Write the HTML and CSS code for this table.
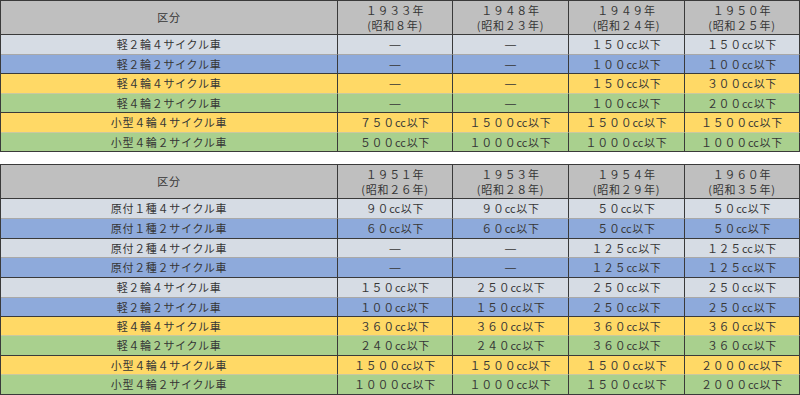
FILE: index.html
```html
<!DOCTYPE html>
<html lang="ja">
<head>
<meta charset="utf-8">
<title>排気量区分</title>
<link rel="stylesheet" href="styles.css">
</head>
<body>
<div class="page">
  <div class="tbl tbl-a">
    <div class="row head">
      <div class="c">区分</div>
      <div class="c"><span class="ln">１９３３年</span><span class="ln">(昭和８年)</span></div>
      <div class="c"><span class="ln">１９４８年</span><span class="ln">(昭和２３年)</span></div>
      <div class="c"><span class="ln">１９４９年</span><span class="ln">(昭和２４年)</span></div>
      <div class="c"><span class="ln">１９５０年</span><span class="ln">(昭和２５年)</span></div>
    </div>
    <div class="row gray">
      <div class="c">軽２輪４サイクル車</div><div class="c"><span class="dash">―</span></div><div class="c"><span class="dash">―</span></div><div class="c">１５０<span class="cc">cc</span>以下</div><div class="c">１５０<span class="cc">cc</span>以下</div>
    </div>
    <div class="row blue end">
      <div class="c">軽２輪２サイクル車</div><div class="c"><span class="dash">―</span></div><div class="c"><span class="dash">―</span></div><div class="c">１００<span class="cc">cc</span>以下</div><div class="c">１００<span class="cc">cc</span>以下</div>
    </div>
    <div class="row yellow">
      <div class="c">軽４輪４サイクル車</div><div class="c"><span class="dash">―</span></div><div class="c"><span class="dash">―</span></div><div class="c">１５０<span class="cc">cc</span>以下</div><div class="c">３００<span class="cc">cc</span>以下</div>
    </div>
    <div class="row green end">
      <div class="c">軽４輪２サイクル車</div><div class="c"><span class="dash">―</span></div><div class="c"><span class="dash">―</span></div><div class="c">１００<span class="cc">cc</span>以下</div><div class="c">２００<span class="cc">cc</span>以下</div>
    </div>
    <div class="row yellow">
      <div class="c">小型４輪４サイクル車</div><div class="c">７５０<span class="cc">cc</span>以下</div><div class="c">１５００<span class="cc">cc</span>以下</div><div class="c">１５００<span class="cc">cc</span>以下</div><div class="c">１５００<span class="cc">cc</span>以下</div>
    </div>
    <div class="row green end">
      <div class="c">小型４輪２サイクル車</div><div class="c">５００<span class="cc">cc</span>以下</div><div class="c">１０００<span class="cc">cc</span>以下</div><div class="c">１０００<span class="cc">cc</span>以下</div><div class="c">１０００<span class="cc">cc</span>以下</div>
    </div>
  </div>

  <div class="tbl tbl-b">
    <div class="row head">
      <div class="c">区分</div>
      <div class="c"><span class="ln">１９５１年</span><span class="ln">(昭和２６年)</span></div>
      <div class="c"><span class="ln">１９５３年</span><span class="ln">(昭和２８年)</span></div>
      <div class="c"><span class="ln">１９５４年</span><span class="ln">(昭和２９年)</span></div>
      <div class="c"><span class="ln">１９６０年</span><span class="ln">(昭和３５年)</span></div>
    </div>
    <div class="row gray">
      <div class="c">原付１種４サイクル車</div><div class="c">９０<span class="cc">cc</span>以下</div><div class="c">９０<span class="cc">cc</span>以下</div><div class="c">５０<span class="cc">cc</span>以下</div><div class="c">５０<span class="cc">cc</span>以下</div>
    </div>
    <div class="row blue end">
      <div class="c">原付１種２サイクル車</div><div class="c">６０<span class="cc">cc</span>以下</div><div class="c">６０<span class="cc">cc</span>以下</div><div class="c">５０<span class="cc">cc</span>以下</div><div class="c">５０<span class="cc">cc</span>以下</div>
    </div>
    <div class="row gray">
      <div class="c">原付２種４サイクル車</div><div class="c"><span class="dash">―</span></div><div class="c"><span class="dash">―</span></div><div class="c">１２５<span class="cc">cc</span>以下</div><div class="c">１２５<span class="cc">cc</span>以下</div>
    </div>
    <div class="row blue end">
      <div class="c">原付２種２サイクル車</div><div class="c"><span class="dash">―</span></div><div class="c"><span class="dash">―</span></div><div class="c">１２５<span class="cc">cc</span>以下</div><div class="c">１２５<span class="cc">cc</span>以下</div>
    </div>
    <div class="row gray">
      <div class="c">軽２輪４サイクル車</div><div class="c">１５０<span class="cc">cc</span>以下</div><div class="c">２５０<span class="cc">cc</span>以下</div><div class="c">２５０<span class="cc">cc</span>以下</div><div class="c">２５０<span class="cc">cc</span>以下</div>
    </div>
    <div class="row blue end">
      <div class="c">軽２輪２サイクル車</div><div class="c">１００<span class="cc">cc</span>以下</div><div class="c">１５０<span class="cc">cc</span>以下</div><div class="c">２５０<span class="cc">cc</span>以下</div><div class="c">２５０<span class="cc">cc</span>以下</div>
    </div>
    <div class="row yellow">
      <div class="c">軽４輪４サイクル車</div><div class="c">３６０<span class="cc">cc</span>以下</div><div class="c">３６０<span class="cc">cc</span>以下</div><div class="c">３６０<span class="cc">cc</span>以下</div><div class="c">３６０<span class="cc">cc</span>以下</div>
    </div>
    <div class="row green end">
      <div class="c">軽４輪２サイクル車</div><div class="c">２４０<span class="cc">cc</span>以下</div><div class="c">２４０<span class="cc">cc</span>以下</div><div class="c">３６０<span class="cc">cc</span>以下</div><div class="c">３６０<span class="cc">cc</span>以下</div>
    </div>
    <div class="row yellow">
      <div class="c">小型４輪４サイクル車</div><div class="c">１５００<span class="cc">cc</span>以下</div><div class="c">１５００<span class="cc">cc</span>以下</div><div class="c">１５００<span class="cc">cc</span>以下</div><div class="c">２０００<span class="cc">cc</span>以下</div>
    </div>
    <div class="row green end">
      <div class="c">小型４輪２サイクル車</div><div class="c">１０００<span class="cc">cc</span>以下</div><div class="c">１０００<span class="cc">cc</span>以下</div><div class="c">１５００<span class="cc">cc</span>以下</div><div class="c">２０００<span class="cc">cc</span>以下</div>
    </div>
  </div>
</div>
</body>
</html>
```

FILE: styles.css
```css
* { box-sizing: border-box; }
html, body {
  margin: 0;
  padding: 0;
  background: #ffffff;
}
body {
  font-family: "Noto Sans CJK JP", "Noto Sans", sans-serif;
  font-size: 11px;
  color: #363636;
  letter-spacing: 0.7px;
}
.page {
  width: 800px;
  display: flex;
  flex-direction: column;
  gap: 12px;
}
.tbl {
  display: grid;
  grid-template-columns: 337px 115px 116px 116px 115px;
  border-left: 1px solid #3a3a3a;
  border-top: 1px solid #3a3a3a;
  width: 800px;
}
.tbl-a {
  grid-template-rows: 34px 20px 19px 20px 19px 20px 19px;
}
.tbl-b {
  grid-template-rows: 34px 20px 20px 19px 20px 20px 19px 19px 20px 19px 20px;
}
.row { display: contents; }
.c {
  display: flex;
  flex-direction: row;
  align-items: center;
  justify-content: center;
  text-align: center;
  white-space: nowrap;
  line-height: 15px;
  border-right: 1px solid #3a3a3a;
  border-bottom: 1px solid #a8a8a8;
}
.head .c {
  flex-direction: column;
}
.ln {
  display: block;
  line-height: 15px;
}
.cc {
  letter-spacing: 0;
  margin-right: 0.7px;
}
.dash {
  font-family: "DejaVu Sans", sans-serif;
  letter-spacing: 0;
  font-size: 11px;
}
.head .c {
  background: #bfbfbf;
  border-bottom: 1px solid #3a3a3a;
}
.gray .c { background: #d6dce4; }
.blue .c { background: #8eaadb; }
.yellow .c { background: #ffd966; border-bottom-color: #c9c9a0; }
.green .c { background: #a9d08e; }
.end .c,
.yellow.end .c,
.green.end .c,
.blue.end .c { border-bottom-color: #3a3a3a; }
```
